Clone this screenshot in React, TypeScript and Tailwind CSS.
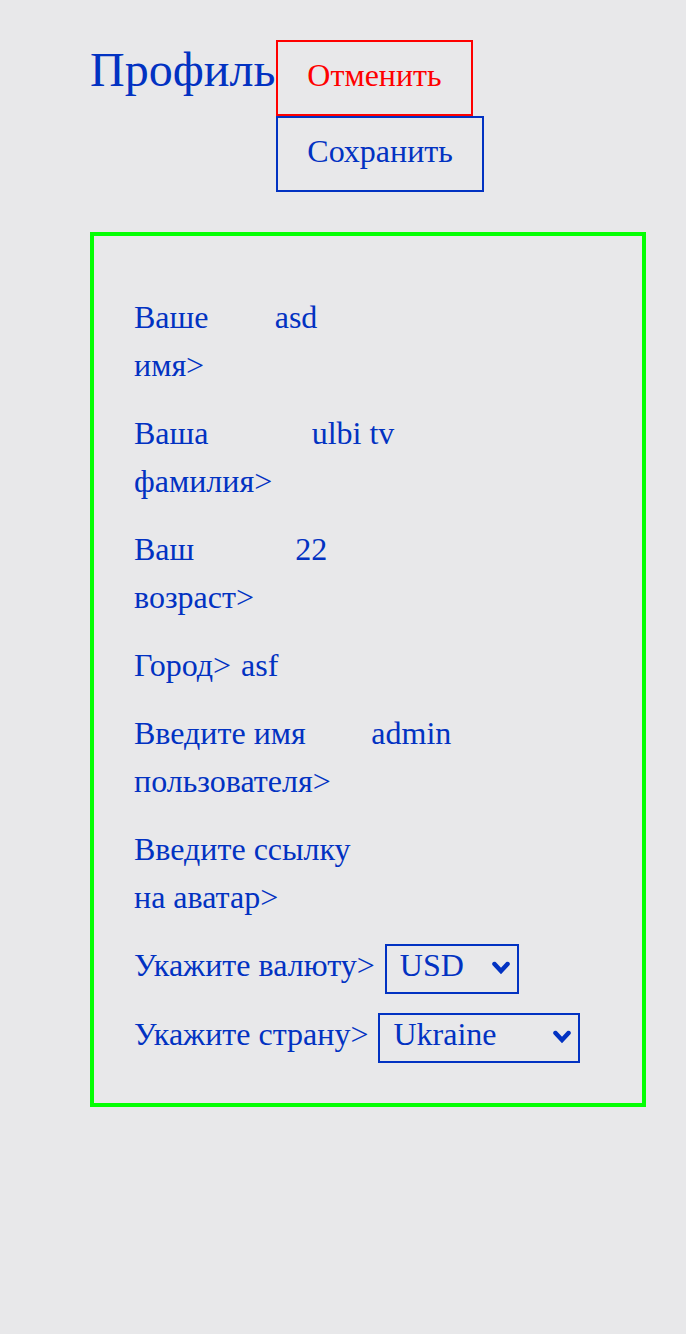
import { useState } from "react"

const blue = "text-[#0232c2]"

type FieldProps = {
  label: string
  value: string
}

function Field({ label, value }: FieldProps) {
  const [val, setVal] = useState(value)
  return (
    <div className="flex">
      <div className="mr-[10px]">{label}</div>
      <div className="w-[382px] min-w-0 grow">
        <input
          className={`w-full bg-transparent outline-none ${blue}`}
          value={val}
          onChange={(e) => setVal(e.target.value)}
        />
      </div>
    </div>
  )
}

function SelectField({ label, options, width }: { label: string; options: string[]; width: string }) {
  return (
    <div className="flex items-baseline">
      <div className="mr-[10px]">{label}</div>
      <div className={`relative ${width}`}>
        <select
          className={`w-full appearance-none border-2 border-[#0232c2] bg-transparent pt-px pr-[40px] pb-[9px] pl-[13px] leading-[normal] outline-none ${blue}`}
          defaultValue={options[0]}
        >
          {options.map((o) => (
            <option key={o}>{o}</option>
          ))}
        </select>
        <svg
          className="pointer-events-none absolute top-1/2 right-[9px] -translate-y-1/2"
          width="18"
          height="13"
          viewBox="0 0 18 13"
          fill="none"
        >
          <path d="M2.5 2.5 L9 9.5 L15.5 2.5" stroke="#0232c2" strokeWidth="4.5" strokeLinecap="round" />
        </svg>
      </div>
    </div>
  )
}

const fields = [
  { label: "Ваше имя>", value: "asd" },
  { label: "Ваша фамилия>", value: "ulbi tv" },
  { label: "Ваш возраст>", value: "22" },
  { label: "Город>", value: "asf" },
  { label: "Введите имя пользователя>", value: "admin" },
  { label: "Введите ссылку на аватар>", value: "" },
]

export default function App() {
  return (
    <div
      className={`min-h-[1334px] bg-[#e8e8ea] pt-[34px] pr-[40px] pl-[90px] text-[32px] leading-[1.5] ${blue}`}
      style={{ fontFamily: '"Liberation Serif", "Times New Roman", serif' }}
    >
      <div className="flex items-baseline">
        <h1 className="mr-px text-[48px] leading-[1.5]">Профиль</h1>
        <div className="flex flex-col items-start">
          <button className="border-2 border-[#ff0000] px-[29px] pt-[9px] pb-[15px] text-[#ff0000]">Отменить</button>
          <button className="border-2 border-[#0232c2] px-[29px] pt-[9px] pb-[15px]">Сохранить</button>
        </div>
      </div>

      <div className="mt-10 flex flex-col gap-5 border-4 border-[#04ff04] px-10 pt-[57px] pb-10">
        {fields.map((f) => (
          <Field key={f.label} label={f.label} value={f.value} />
        ))}
        <div className="flex flex-col gap-4">
          <SelectField label="Укажите валюту>" options={["USD", "EUR", "RUB"]} width="w-[134px]" />
          <SelectField label="Укажите страну>" options={["Ukraine", "Russia", "Belarus", "Kazakhstan", "Armenia"]} width="w-[202px]" />
        </div>
      </div>
    </div>
  )
}
